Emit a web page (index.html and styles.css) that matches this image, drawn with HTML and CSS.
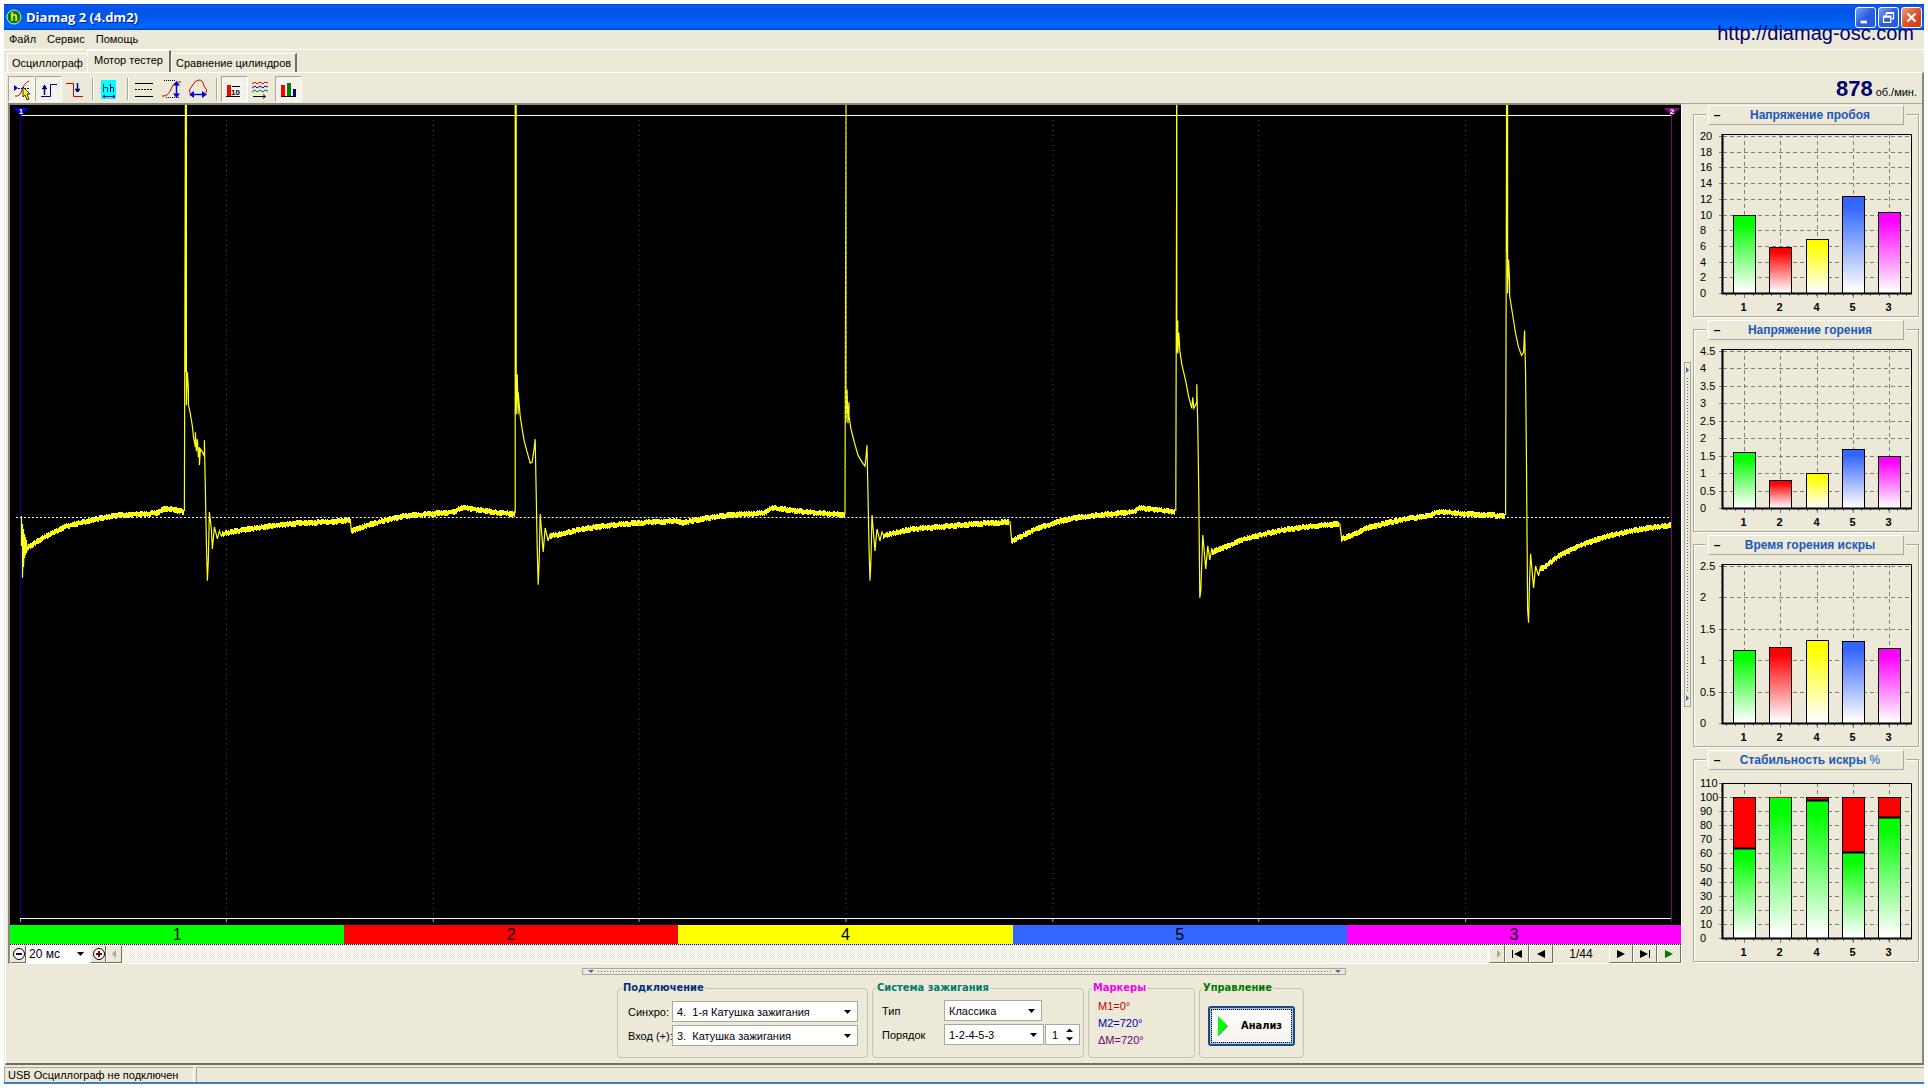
FILE: index.html
```html
<!DOCTYPE html>
<html lang="ru">
<head>
<meta charset="utf-8">
<title>Diamag 2 (4.dm2)</title>
<link rel="stylesheet" href="styles.css">
</head>
<body>
<div class="window">
  <header class="titlebar">
    <svg class="app-icon" viewBox="0 0 16 16" aria-hidden="true"><circle cx="8" cy="8" r="7" fill="#0a7a0a" stroke="#d8f0d8"/><text x="8" y="12" text-anchor="middle" class="app-letter">h</text></svg>
    <h1 class="title">Diamag 2 (4.dm2)</h1>
    <button class="win-btn" aria-label="Свернуть"><svg viewBox="0 0 21 21"><path d="M5 14h7v3H5z" fill="#fff"/></svg></button>
    <button class="win-btn" aria-label="Восстановить"><svg viewBox="0 0 21 21"><path d="M8 5h8v7h-2M8 6h8M8 5v4M5 9h8v7H5zM5 10h8" fill="none" stroke="#fff" stroke-width="1.4"/></svg></button>
    <button class="win-btn win-close" aria-label="Закрыть"><svg viewBox="0 0 21 21"><path d="M6 6l9 9M15 6l-9 9" stroke="#fff" stroke-width="2.4"/></svg></button>
  </header>
  <a class="site" href="#">http://diamag-osc.com</a>
  <nav class="menu">
    <button>Файл</button><button>Сервис</button><button>Помощь</button>
  </nav>
  <div class="tabs" role="tablist">
    <button class="tab" role="tab">Осциллограф</button>
    <button class="tab tab-active" role="tab" aria-selected="true">Мотор тестер</button>
    <button class="tab tab-last" role="tab">Сравнение цилиндров</button>
  </div>
  <main class="page">
    <div class="toolbar">
      <button class="tool pressed" aria-label="Курсор"><svg viewBox="0 0 27 26"><path d="M7 20q5 1 7-6t7-9" stroke="#d00000" fill="none"/><path d="M6 9v6l4-3z" fill="#0000c0"/><path d="M10 12.500h11" stroke="#0000c0" stroke-dasharray="2 1"/><path d="M15 11l7 7h-3l2 5-2 1-2-5-2 2z" fill="#ff0" stroke="#000" stroke-width=".8"/></svg></button>
      <button class="tool pressed" aria-label="Фронт"><svg viewBox="0 0 27 26" fill="none" stroke="#000090"><path d="M6 20.500h9.500v-12H22"/><path d="M9.500 19V9M7 12.500h5M8 11h3" stroke-width="1.500"/></svg></button>
      <button class="tool" aria-label="Спад"><svg viewBox="0 0 27 26" fill="none"><path d="M4 7.500h7.500v13H21" stroke="#d00000"/><path d="M15.500 7v9M13 13.500h5M14 15h3" stroke="#000090" stroke-width="1.500"/></svg></button>
      <span class="sep"></span>
      <button class="tool" aria-label="Масштаб"><svg viewBox="0 0 27 26" fill="none"><path d="M4 4h15v19H4z" fill="#0ff"/><path d="M6.500 8v8M6 11.500h4.500V16" stroke="#103030"/><path d="M13.500 8v8M13 11.500h3.500V16" stroke="#0000a0"/><path d="M6 20.500h12M8 19l-2 1.500L8 22M16 19l2 1.500L16 22" stroke="#0000a0"/></svg></button>
      <span class="sep"></span>
      <button class="tool" aria-label="Уровни"><svg viewBox="0 0 27 26" stroke="#000"><path d="M3 7.500h18M3 20.500h18"/><path d="M3 13.500h18" stroke-dasharray="2 1"/></svg></button>
      <button class="tool" aria-label="Амплитуда"><svg viewBox="0 0 27 26" fill="none"><path d="M3 20q6 1 9-7t10-7" stroke="#d00000"/><path d="M5 4.500h11M7 21.500h13" stroke="#000" stroke-dasharray="1 1"/><path d="M17.500 8v11" stroke="#0000d0" stroke-width="1.500"/><path d="M17.500 5l3.500 4.500h-7zM17.500 22l3.500-4.500h-7z" fill="#0000d0"/></svg></button>
      <button class="tool" aria-label="Длительность"><svg viewBox="0 0 27 26" fill="none"><path d="M4 17q-2-3 2-7 3-6 7-6t5 6q4 4 2 7" stroke="#d00000"/><path d="M5 18.500h14" stroke="#0000d0" stroke-width="1.500"/><path d="M3 18.500l5-3.500v7zM21 18.500l-5-3.500v7z" fill="#0000d0"/></svg></button>
      <span class="sep"></span>
      <button class="tool pressed" aria-label="Значения"><svg viewBox="0 0 27 26"><path d="M6 9h4v11H6z" fill="#f00"/><path d="M5 20.500h14M11 10.500h8" stroke="#000"/><text x="10" y="19" class="tool-text">10</text></svg></button>
      <button class="tool" aria-label="Наложение"><svg viewBox="0 0 27 26" fill="none"><path d="M4 8l3-2 2 2 3-2 3 2 2-2 3 1" stroke="#e00000"/><path d="M4 12l3-2 2 2 3-2 3 2 2-2 3 1" stroke="#0000e0"/><path d="M4 16l3-2 2 2 3-2 3 2 2-2 3 1" stroke="#008000"/><path d="M5 20.500h12M15 18.500l2.500 2-2.500 2" stroke="#000"/></svg></button>
      <button class="tool pressed" aria-label="Диаграммы"><svg viewBox="0 0 27 26"><path d="M6 9h4v11H6z" fill="#f00"/><path d="M12 7h4v13h-4z" fill="#008000"/><path d="M18 13h3v7h-3z" fill="#000080"/><path d="M6 20.500h15" stroke="#000"/></svg></button>
      <p class="rpm"><strong>878</strong> <span>об./мин.</span></p>
    </div>
    <div class="work">
      <section class="scope">
        <div class="screen">
          <svg class="trace" id="trace" viewBox="10 105 1672 822" preserveAspectRatio="none" role="img" aria-label="Осциллограмма зажигания"></svg>
          <span class="marker marker-1">1</span>
          <span class="marker marker-2">2</span>
        </div>
        <ol class="strip"><li class="c1">1</li><li class="c2">2</li><li class="c4">4</li><li class="c5">5</li><li class="c3">3</li></ol>
        <div class="nav">
          <button class="nav-btn slim" aria-label="Уменьшить"><svg viewBox="0 0 16 16"><circle cx="8" cy="8" r="5.500" fill="#fff" stroke="#000"/><path d="M5 8h6" stroke="#000080" stroke-width="2"/></svg></button>
          <select class="time" aria-label="Развёртка"><option>20 мс</option></select>
          <button class="nav-btn slim" aria-label="Увеличить"><svg viewBox="0 0 16 16"><circle cx="8" cy="8" r="5.500" fill="#fff" stroke="#000"/><path d="M5 8h6M8 5v6" stroke="#800000" stroke-width="2"/></svg></button>
          <button class="nav-btn slim" aria-label="Прокрутить влево" disabled><svg viewBox="0 0 16 16"><path d="M9 4v8L5 8z" fill="#aca899"/></svg></button>
          <div class="track"></div>
          <button class="nav-btn slim" aria-label="Прокрутить вправо" disabled><svg viewBox="0 0 16 16"><path d="M7 4v8l4-4z" fill="#aca899"/></svg></button>
          <button class="nav-btn" aria-label="Первый"><svg viewBox="0 0 16 16"><path d="M3 4h1v8H3zM13 4v8L5 8z"/></svg></button>
          <button class="nav-btn" aria-label="Назад"><svg viewBox="0 0 16 16"><path d="M12 4v8L4 8z"/></svg></button>
          <output class="count">1/44</output>
          <button class="nav-btn" aria-label="Вперёд"><svg viewBox="0 0 16 16"><path d="M4 4v8l8-4z"/></svg></button>
          <button class="nav-btn" aria-label="Последний"><svg viewBox="0 0 16 16"><path d="M3 4v8l8-4zM12 4h1v8h-1z"/></svg></button>
          <button class="nav-btn" aria-label="Воспроизвести"><svg viewBox="0 0 16 16"><path d="M4 4v8l8-4z" fill="#007a00"/></svg></button>
        </div>
      </section>
      <div class="vgrip"><div class="grip-body"><svg viewBox="0 0 5 7"><path d="M1 0v6l3-3z"/></svg><i></i><svg viewBox="0 0 5 7"><path d="M1 0v6l3-3z"/></svg></div></div>
      <aside class="charts">
        <section class="panel"><button class="panel-head"><b>–</b><span>Напряжение пробоя</span></button><svg class="chart" viewBox="0 0 225 192" data-chart="breakdown"></svg></section>
        <section class="panel"><button class="panel-head"><b>–</b><span>Напряжение горения</span></button><svg class="chart" viewBox="0 0 225 192" data-chart="burn"></svg></section>
        <section class="panel"><button class="panel-head"><b>–</b><span>Время горения искры</span></button><svg class="chart" viewBox="0 0 225 192" data-chart="time"></svg></section>
        <section class="panel"><button class="panel-head"><b>–</b><span>Стабильность искры <em>%</em></span></button><svg class="chart" viewBox="0 0 225 192" data-chart="stability"></svg></section>
      </aside>
    </div>
    <div class="hgrip"><div class="grip-body"><svg viewBox="0 0 7 5"><path d="M1 1h6L4 4z"/></svg><i></i><svg viewBox="0 0 7 5"><path d="M1 1h6L4 4z"/></svg></div></div>
    <form class="settings">
      <fieldset class="group connect">
        <legend>Подключение</legend>
        <label for="sync">Синхро:</label><select id="sync"><option>4.&nbsp; 1-я Катушка зажигания</option></select>
        <label for="input">Вход (+):</label><select id="input"><option>3.&nbsp; Катушка зажигания</option></select>
      </fieldset>
      <fieldset class="group ignition">
        <legend>Система зажигания</legend>
        <label for="type">Тип</label><select id="type"><option>Классика</option></select>
        <label for="order">Порядок</label>
        <div class="order"><select id="order"><option>1-2-4-5-3</option></select><span class="spin"><input type="text" value="1" aria-label="Цилиндр"><svg viewBox="0 0 8 14" aria-hidden="true"><path d="M0 4l4-4 4 4zM0 10l4 4 4-4z"/></svg></span></div>
      </fieldset>
      <fieldset class="group markers">
        <legend>Маркеры</legend>
        <p class="m1">M1=0°</p><p class="m2">M2=720°</p><p class="md">ΔM=720°</p>
      </fieldset>
      <fieldset class="group control">
        <legend>Управление</legend>
        <button type="button" class="analyze"><svg viewBox="0 0 10 20" aria-hidden="true"><path d="M0 0v20l10-10z" fill="#0f0"/><path d="M0 20l10-10" stroke="#808080"/></svg><span>Анализ</span></button>
      </fieldset>
    </form>
  </main>
  <footer class="status"><span class="status-text">USB Осциллограф не подключен</span><span class="status-rest"></span></footer>
</div>
<script src="draw.js"></script>
</body>
</html>
```

FILE: styles.css
```css
* { box-sizing: border-box; }
body { margin: 0; background: #fff; color: #000; font: 11px/14px "Liberation Sans", Arial, sans-serif; }
button, select, input { font: inherit; color: inherit; margin: 0; padding: 0; border-radius: 0; }
button { border: 0; background: none; }
p, h1, ol { margin: 0; padding: 0; }
svg { display: block; }

.window { position: relative; display: flex; flex-direction: column; min-height: calc(100vh - 8px); margin: 4px; background: #ece9d8; border-bottom: 2px solid #3c7cc8; }

.titlebar { display: flex; align-items: center; gap: 2px; height: 26px; padding: 0 2px; background: linear-gradient(#0a3fd0 0, #0a5cf0 2px, #0054e3 6px, #0058ee 14px, #0066ff 21px, #0062f8 24px, #003dc0 26px); }
.app-icon { width: 16px; height: 16px; }
.app-letter { font: bold 12px "Liberation Sans", sans-serif; fill: #e8f040; }
.title { flex: 1; padding-left: 2px; color: #fff; font: bold 13px/20px "Open Sans", sans-serif; text-shadow: 1px 1px #0a1883; }
.win-btn { width: 21px; height: 21px; border: 1px solid #fff; border-radius: 3px; background: linear-gradient(135deg, #7ea2f0, #2c5ce0 50%, #2a58d8); }
.win-btn svg { width: 19px; height: 19px; }
.win-close { background: linear-gradient(135deg, #f0a080, #e0502c 50%, #c83c14); }
.site { position: absolute; top: 17px; right: 10px; color: #00006a; font-size: 20px; line-height: 24px; text-decoration: none; }

.menu { display: flex; gap: 11px; height: 20px; padding: 0 0 2px 5px; border-bottom: 1px solid #fff; }
.tabs { display: flex; align-items: flex-end; height: 22px; padding-left: 3px; }
.tab { height: 19px; padding: 0 4px; border-top: 1px solid #fff; border-left: 1px solid #fff; }
.tab-active { height: 22px; padding: 0 6px 3px; border-right: 2px solid #716f64; }
.tab-last { border-right: 2px solid #716f64; }

.page { flex: 1; display: flex; flex-direction: column; margin-left: 1px; border: 1px solid #fff; border-right: 2px solid #8a887c; border-bottom: 2px solid #716f64; }
.toolbar { display: flex; align-items: center; height: 30px; padding: 2px 5px 0 2px; }
.tool { width: 27px; height: 26px; }
.tool svg { width: 27px; height: 26px; }
.tool-text { font: bold 8px "Liberation Sans", sans-serif; }
.pressed { border: 1px solid; border-color: #aca899 #fff #fff #aca899; background: repeating-conic-gradient(#fff 0 25%, #ece9d8 0 50%) 0 0 / 2px 2px; }
.pressed svg { margin: -1px; }
.sep { width: 2px; height: 22px; margin: 0 3px; border-left: 1px solid #aca899; border-right: 1px solid #fff; }
.rpm { display: flex; align-items: baseline; gap: 3px; margin-left: auto; }
.rpm strong { color: #000070; font-size: 22px; line-height: 26px; }

.work { flex: 1; display: flex; }
.scope { flex: 1; display: flex; flex-direction: column; min-width: 0; margin-left: 2px; border: 2px solid #8a887c; border-right: 1px solid #fff; border-bottom: 1px solid #fff; }
.screen { position: relative; flex: 1; min-height: 400px; background: #000; }
.trace { position: absolute; width: 100%; height: 100%; }
.marker { position: absolute; top: 3px; width: 16px; height: 8px; color: #fff; font: bold 8px/8px "Liberation Sans", sans-serif; text-align: center; clip-path: polygon(0 0, 100% 0, 50% 100%); }
.marker-1 { left: 3px; background: #0000c0; }
.marker-2 { right: 1px; background: #78107c; }
.strip { display: flex; height: 20px; list-style: none; border-bottom: 1px dotted #000; }
.strip li { flex: 1; font-size: 16px; line-height: 19px; text-align: center; }
.c1 { background: #0f0; }
.c2 { background: #f00; }
.c4 { background: #ff0; }
.c5 { background: #3366ff; }
.c3 { background: #f0f; }

.nav { display: flex; height: 18px; }
.nav-btn { display: grid; place-items: center; width: 24px; background: #ece9d8; border: 1px solid; border-color: #fff #716f64 #716f64 #fff; }
.nav-btn svg { width: 16px; height: 16px; }
.slim { width: 16px; }
.track { flex: 1; background: repeating-conic-gradient(#fff 0 25%, #ece9d8 0 50%) 0 0 / 2px 2px; }
.count { width: 56px; font-size: 12px; line-height: 18px; text-align: center; }

select { appearance: none; border: 1px solid #aca899; background: #fff url("data:image/svg+xml,%3Csvg xmlns='http://www.w3.org/2000/svg' width='7' height='4'%3E%3Cpath d='M0 0h7L3.500 4z'/%3E%3C/svg%3E") no-repeat right 6px center; }
.time { width: 64px; padding-left: 3px; border: 0; font-size: 12px; }

.grip-body { display: flex; border: 1px solid #aca899; fill: #3c6cb4; }
.grip-body i { flex: 1; }
.vgrip { display: flex; align-items: center; width: 10px; padding-left: 2px; border-top: 1px solid #aca899; }
.vgrip .grip-body { flex-direction: column; gap: 2px; width: 7px; height: 345px; padding: 4px 0; }
.vgrip i { background: repeating-linear-gradient(#ece9d8 0 2px, transparent 2px 3px), linear-gradient(90deg, #ece9d8 2px, #3c6cb4 2px 3px, #ece9d8 3px); }
.vgrip svg { width: 5px; height: 7px; }
.charts { display: flex; flex-direction: column; gap: 3px; width: 230px; padding: 1px 0 0 1px; border-top: 1px solid #aca899; }
.panel { position: relative; width: 226px; }
.panel::before { content: ""; position: absolute; inset: 9px 0 0; border: 1px solid #aca899; box-shadow: inset 1px 1px #fff, 1px 1px #fff; }
.panel-head { position: relative; display: flex; align-items: center; width: 196px; height: 20px; margin: 0 0 0 15px; padding: 0 4px; border: 1px solid; border-color: #fff #aca899 #aca899 #fff; background: #ece9d8; box-shadow: 2px 0 #ece9d8, -2px 0 #ece9d8; color: #2058b8; font-size: 12px; font-weight: bold; }
.panel-head b { width: 8px; color: #000; }
.panel-head span { flex: 1; }
.panel-head em { font-style: normal; font-weight: normal; }
.chart { position: relative; width: 225px; height: 192px; }
.chart text { font: 11px "Liberation Sans", sans-serif; }
.chart .cat { font-weight: bold; text-anchor: middle; }

.hgrip { display: flex; justify-content: center; padding-top: 4px; }
.hgrip .grip-body { gap: 2px; width: 764px; height: 7px; padding: 0 4px; }
.hgrip i { background: repeating-linear-gradient(90deg, #ece9d8 0 2px, transparent 2px 3px), linear-gradient(#ece9d8 2px, #3c6cb4 2px 3px, #ece9d8 3px); }
.hgrip svg { width: 7px; height: 5px; }

.settings { display: flex; justify-content: center; gap: 4px; margin: 6px 7px 5px 0; }
.group { display: grid; align-content: start; min-width: 0; height: 77px; margin: 0; padding: 6px 10px 0; border: 1px solid #c8c4b4; border-radius: 4px; }
.group legend { margin-left: -6px; padding: 0 1px; font: bold 11px/14px "DejaVu Sans Condensed", "DejaVu Sans", sans-serif; }
.group label { white-space: nowrap; }
.group select { height: 21px; padding-left: 4px; }
.connect { grid-template-columns: 44px 186px; gap: 3px 0; width: 251px; align-items: center; }
.connect legend { color: #00307a; }
.ignition { grid-template-columns: 62px 137px; gap: 3px 0; width: 212px; padding: 5px 2px 0 9px; align-items: center; }
.ignition legend { color: #007a70; }
#type { width: 98px; }
.order { display: flex; gap: 1px; }
#order { width: 100px; }
.spin { display: flex; align-items: center; width: 35px; height: 21px; border: 1px solid #aca899; background: #fff; }
.spin input { width: 20px; border: 0; padding-left: 6px; outline: 0; background: none; }
.spin svg { width: 7px; height: 13px; }
.markers { width: 107px; padding: 3px 9px 0; line-height: 17px; }
.markers legend { color: #f000f0; }
.m1 { color: #c00000; }
.m2 { color: #0000b0; }
.md { color: #700070; }
.control { width: 105px; padding: 11px 8px 0; }
.control legend { color: #007800; }
.analyze { display: flex; align-items: center; gap: 13px; width: 87px; height: 40px; padding-left: 8px; border: 2px solid #1c4a80; border-radius: 3px; outline: 1px dotted #000; outline-offset: -4px; background: linear-gradient(#fff, #f4f2ea); box-shadow: inset 0 0 0 2px #a8c4ec; font: bold 11px/14px "DejaVu Sans Condensed", "DejaVu Sans", sans-serif; }
.analyze svg { width: 10px; height: 20px; }

.status { display: flex; gap: 2px; height: 15px; margin-top: 2px; line-height: 14px; }
.status span { border-top: 1px solid #aca899; border-left: 1px solid #aca899; }
.status-text { width: 190px; padding-left: 3px; border-right: 1px solid #fff; white-space: nowrap; }
.status-rest { flex: 1; }
```

FILE: draw.js
```js
// Ignition trace. "slow" runs are noisy thick stretches, "fast" runs are thin spikes.
const slow = [
  [[28,547],[36,542],[46,536],[64,527],[79,523],[96,519],[107,517],[121,515],[143,514],[157,513],[163,509],[170,509],[184,512]],
  [[222,534],[236,531],[250,529],[271,526],[300,523],[332,522],[350,520]],
  [[351,531],[354,530],[368,525],[386,520],[404,516],[429,514],[454,512],[460,508],[466,508],[479,510],[500,513],[515,514]],
  [[550,536],[561,534],[577,530],[596,527],[623,524],[653,522],[678,521],[682,523],[691,521],[707,518],[730,515],[764,513],[771,508],[781,509],[806,512],[845,515]],
  [[884,536],[894,533],[913,529],[940,527],[975,524],[1010,522]],
  [[1012,541],[1017,539],[1036,529],[1055,523],[1074,518],[1100,515],[1134,512],[1140,508],[1150,509],[1176,512]],
  [[1213,552],[1226,547],[1242,540],[1261,535],[1284,530],[1314,526],[1340,524]],
  [[1342,539],[1353,535],[1368,528],[1387,523],[1406,519],[1429,516],[1437,512],[1448,512],[1464,514],[1506,516]],
  [[1541,568],[1544,568],[1559,556],[1582,545],[1605,537],[1636,530],[1672,525]]
];
const fast = [
  [[21,517],[21,547],[22,525],[22,579],[23,530],[23,568],[24,535],[24,559],[25,538],[25,556],[26,541],[26,554],[28,545]],
  [[184,512],[185,105],[186,105],[186,406],[187,373],[188,390],[188,405],[190,415],[192,427],[193,437],[195,448],[195,433],[196,452],[197,440],[198,458],[199,448],[199,466],[200,450],[202,453],[204,457],[204,441],[205,492],[206,543],[207,582],[208,560],[209,513],[211,530],[212,550],[214,528],[217,540],[219,532],[221,537],[223,534]],
  [[350,520],[351,532]],
  [[515,514],[515,105],[516,105],[516,415],[517,375],[518,415],[518,393],[520,417],[522,430],[524,442],[527,453],[530,464],[532,463],[534,449],[535,440],[536,493],[537,548],[538,586],[539,562],[540,515],[543,553],[545,529],[548,542],[550,535]],
  [[845,515],[846,105],[846,423],[847,390],[848,424],[849,403],[849,417],[851,430],[854,442],[858,456],[862,463],[865,467],[866,458],[867,446],[868,495],[869,547],[870,582],[871,560],[872,516],[875,552],[877,530],[880,542],[882,533],[884,537]],
  [[1010,522],[1012,544]],
  [[1176,512],[1177,105],[1177,353],[1178,321],[1178,354],[1179,333],[1180,351],[1182,365],[1186,382],[1189,398],[1192,409],[1193,398],[1194,409],[1197,403],[1197,385],[1198,427],[1199,494],[1200,599],[1201,592],[1203,536],[1206,570],[1208,547],[1210,561],[1212,550],[1214,553]],
  [[1340,524],[1342,540]],
  [[1506,516],[1507,105],[1508,105],[1508,294],[1509,260],[1510,282],[1510,296],[1513,315],[1516,334],[1519,348],[1522,356],[1524,353],[1525,331],[1526,375],[1527,475],[1528,610],[1529,624],[1530,582],[1531,555],[1534,589],[1536,567],[1539,577],[1541,567]]
];
// Pairs of x and lower end of the strongest part of each spike.
const cores = [[185,373],[515,400],[1177,345],[1507,252],[1508,252]];

let seed = 7;
const rand = () => (seed = (seed * 16807) % 2147483647) / 2147483647;

let thick = '';
for (const run of slow) {
  for (let i = 1; i < run.length; i++) {
    const [x0, y0] = run[i - 1], [x1, y1] = run[i];
    for (let x = x0; x < x1; x++) {
      const y = Math.round(y0 + (y1 - y0) * (x - x0) / (x1 - x0));
      thick += `M${x + 0.5} ${y - 1 - Math.round(rand() * 1.3)}V${y + 3 + Math.round(rand() * 1.2)}`;
    }
  }
}
const thin = fast.map(r => 'M' + r.map(([x, y]) => `${x + 0.5} ${y}`).join('L')).join('');
const core = cores.map(([x, y]) => `M${x + 0.5} 105V${y}`).join('');
let grid = '', ticks = '';
for (let i = 1; i < 8; i++) {
  const x = Math.floor(20 + i * 206.6) + 0.5;
  grid += `M${x} 120V920`;
  ticks += `M${x} 921V924`;
}
document.getElementById('trace').innerHTML =
  `<path d="${ticks}M20.500 921V924" stroke="#aaa"/>
   <path d="M20 115.500H1672M20 920.500H1672" stroke="#fff"/>
   <path d="M20.500 110V920" stroke="#0000a0"/>
   <g fill="none" stroke="#ffff14" shape-rendering="crispEdges"><path d="${thick}"/><path d="${core}"/></g>
   <path d="${thin}" fill="none" stroke="#ffff14" stroke-width="1.200"/>
   <path d="${grid}" stroke="#555" stroke-dasharray="1 4"/>
   <path d="M16 518.500H1672" stroke="#fff" stroke-dasharray="2 2"/>
   <path d="M1672.500 110V924" stroke="#68186c"/>`;

// Bar charts of the right-hand panels.
const names = ['1', '2', '4', '5', '3'];
const colors = ['#00ff00', '#ff0000', '#ffff00', '#3366ff', '#ff00ff'];
const charts = {
  breakdown: { max: 20, step: 2, minor: 5, values: [9.9, 5.9, 6.9, 12.3, 10.3] },
  burn: { max: 4.5, step: 0.5, minor: 5, values: [1.6, 0.8, 1, 1.7, 1.5] },
  time: { max: 2.5, step: 0.5, minor: 4, values: [1.16, 1.21, 1.32, 1.3, 1.19] },
  stability: { max: 110, step: 10, minor: 5, values: [64, 100, 98, 61, 86], stacked: true }
};
for (const svg of document.querySelectorAll('[data-chart]')) {
  const key = svg.dataset.chart, c = charts[key];
  const base = 168, top = c.stacked ? 13 : 11, frame = c.stacked ? 13 : 9;
  const y = v => Math.round(base - (base - top) * v / c.max) + 0.5;
  let out = '<defs>', lines = '', marks = '', bars = '';
  colors.forEach((col, i) => {
    out += `<linearGradient id="${key}${i}" x2="0" y2="1"><stop offset=".1" stop-color="${c.stacked ? '#00ff00' : col}"/><stop offset=".97" stop-color="#fff"/></linearGradient>`;
  });
  out += '</defs>';
  const n = Math.round(c.max / c.step);
  for (let i = 0; i <= n; i++) {
    const v = i * c.step;
    lines += `M30 ${y(v)}H218`;
    marks += `M26 ${y(v)}H30`;
    if (i < n) for (let k = 1; k < c.minor; k++) marks += `M28 ${y(v + c.step * k / c.minor)}H30`;
    out += `<text x="7" y="${y(v) + 3.500}">${v}</text>`;
  }
  for (let i = 0; i < 21; i++) marks += `M${33.5 + i * 9} 169V171`;
  c.values.forEach((v, i) => {
    const x = Math.round(40 + i * 36.3) + 0.5, mid = x + 11;
    lines += `M${mid} ${frame}V168`;
    marks += `M${mid} 169V173`;
    if (c.stacked) bars += `<rect x="${x}" y="${y(100)}" width="22" height="${168.5 - y(100)}" fill="#f00" stroke="${v === 100 ? '#f00' : '#000'}"/>`;
    bars += `<rect x="${x}" y="${y(v)}" width="22" height="${168.5 - y(v)}" fill="url(#${key}${i})" stroke="#000"/>`;
    if (c.stacked) bars += `<path d="M${x} ${y(v)}h22" stroke="${v === 100 ? '#f00' : '#000'}" stroke-width="${v === 100 ? 1 : 2}"/>`;
    out += `<text class="cat" x="${mid - 1}" y="186">${names[i]}</text>`;
  });
  svg.innerHTML = out +
    `<path d="${lines}" stroke="#808078" stroke-dasharray="4 3"/><path d="${marks}" stroke="#808078"/>` + bars +
    `<path d="M29 ${frame + 0.5}H218.500V168" fill="none" stroke="#000"/><path d="M29.500 ${frame}V168.500H219" fill="none" stroke="#000" stroke-width="2"/>`;
}
```
